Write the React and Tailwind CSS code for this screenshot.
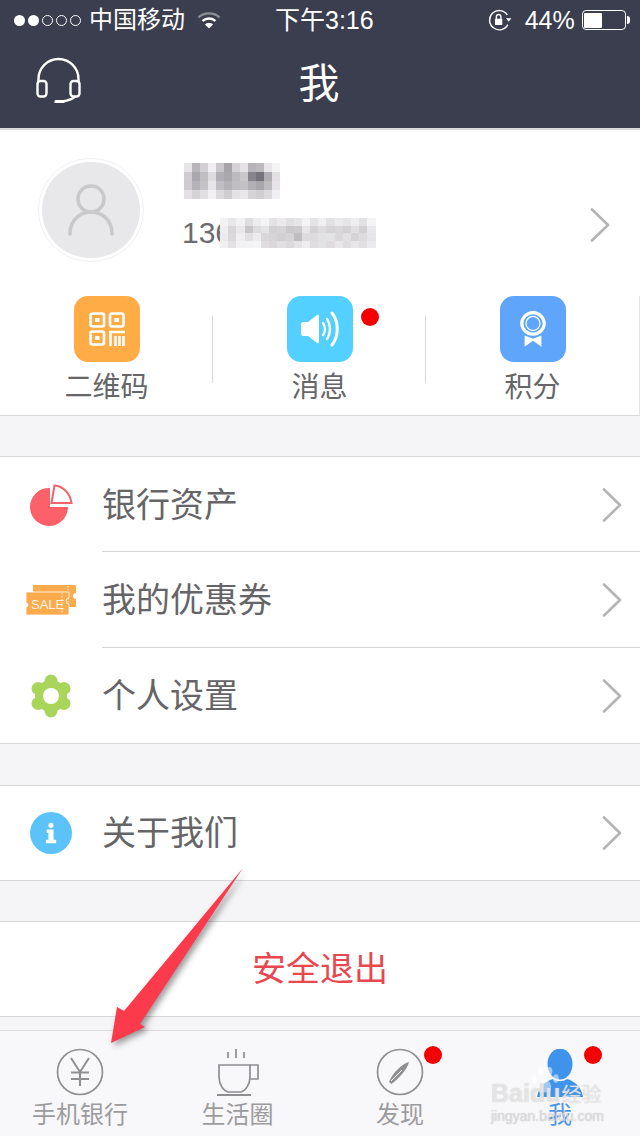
const FONT = '"Liberation Sans", "Noto Sans CJK SC", sans-serif';

const NAME_CELLS = [
  "e8e5e8","b9b6ba","d2d0d3","f0eef0","c9c7ca","a5a3a7","d4d2d5","e4e2e5","b6b4b8","bcbabd","e8e6e8","f5f4f5",
  "cfccd0","aaa8ac","c0bec1","dddbde","b2b0b4","a9a7ab","bcbabe","c9c7ca","87858a","76747a","b0aeb2","e2e0e3",
  "cdcbce","b5b3b7","c5c3c6","e6e4e7","c0bec2","b4b2b6","bfbdc0","c3c1c4","b1afb3","a8a6aa","bdbbbe","e6e4e7",
  "e3e1e4","d5d3d6","e1dfe2","f2f0f3","dcdadd","cfcdd0","e4e2e5","e9e7ea","d6d4d7","d0ced1","dcdadd","f0eff1",
];
const PHONE_CELLS = [
  "f3f2f3","e7e6e8","f1f0f2","dfdde0","ecebed","f3f2f4","e3e2e4","eceaed","e0dfe1","e6e5e7","f4f3f5","e4e3e5","f0eff1","e1e0e2","ebeaec","e6e5e7","eeedef","e2e1e3","f4f3f5",
  "eeeeef","d8d6d9","e8e7e9","c8c6c9","dddbde","e4e3e5","d2d0d3","d6d4d7","cac8cb","cdcbce","e6e5e7","d4d2d5","dedcdf","d6d4d7","d9d7da","d4d2d5","e0dfe1","d3d1d4","e8e7e9",
  "eceaed","dbd9dc","efeef0","e2e0e3","ecebed","d9d7da","d6d4d7","d2d0d3","d5d3d6","bfbdc0","dedcdf","dddbde","e2e1e3","e3e2e4","dad8db","e1e0e2","d5d3d6","dddbde","e5e4e6",
  "f0eff1","e3e1e4","f2f1f3","f3f2f4","f4f3f5","dfdde0","dad8db","e1dfe2","dcdadd","e5e3e6","eeedef","e0dee1","e3e2e4","dedcdf","e7e6e8","e0dee1","e6e5e7","e1dfe2","ebeaec",
];

function Mosaic({ cells, cols, cell, rowH, className }) {
  return (
    <div
      className={`grid ${className}`}
      style={{ gridTemplateColumns: `repeat(${cols}, ${cell}px)`, gridAutoRows: `${rowH}px` }}
    >
      {cells.map((c, i) => (
        <div key={i} style={{ backgroundColor: `#${c}` }} />
      ))}
    </div>
  );
}

function Chevron({ className }) {
  return (
    <svg viewBox="0 0 20 34" className={className} fill="none" stroke="#b4b4b6" strokeWidth="2.6">
      <path d="M2 1.5 L18 17 L2 32.5" strokeLinecap="round" strokeLinejoin="round" />
    </svg>
  );
}

function Dot({ className }) {
  return <span className={`absolute w-[18px] h-[18px] rounded-full bg-[#f50000] ${className}`} />;
}

function StatusBar() {
  return (
    <div className="relative h-10 flex items-center text-white text-[24px] pl-[14px]">
      <div className="flex gap-[3px] items-center">
        <span className="w-[11px] h-[11px] rounded-full bg-white" />
        <span className="w-[11px] h-[11px] rounded-full bg-white" />
        <span className="w-[11px] h-[11px] rounded-full border border-white" />
        <span className="w-[11px] h-[11px] rounded-full border border-white" />
        <span className="w-[11px] h-[11px] rounded-full border border-white" />
      </div>
      <span className="ml-[8px] leading-none">中国移动</span>
      <svg viewBox="0 0 24 18" className="ml-[12px] w-[24px] h-[18px]" fill="none">
        <path d="M1.5 6.5 C7 1 17 1 22.5 6.5" stroke="#8b8d97" strokeWidth="2.4" />
        <path d="M5.5 10 C9 6.6 15 6.6 18.5 10" stroke="#fff" strokeWidth="2.4" />
        <path d="M12 17.5 L8 13.5 C10 11.6 14 11.6 16 13.5 Z" fill="#fff" />
      </svg>
      <span className="ml-[54px] text-[25px] leading-none">下午3:16</span>
      <svg viewBox="0 0 26 24" className="ml-[114px] w-[24px] h-[22px]" fill="none" stroke="#fff" strokeWidth="1.5">
        <path d="M21 6.5 A10.5 10.5 0 1 0 21.5 17" />
        <path d="M19.5 10 L25.5 10 L22.5 14 Z" fill="#fff" stroke="none" />
        <rect x="7.5" y="10.5" width="8" height="7" rx="1" fill="#fff" stroke="none" />
        <path d="M9 11 V8.5 A2.5 2.5 0 0 1 14 8.5 V11" />
      </svg>
      <span className="ml-[13px] text-[25px] leading-none">44%</span>
      <div className="ml-[7px] w-[44px] h-[20px] rounded-[4px] border border-white p-[1.5px] flex">
        <div className="w-[18px] bg-white rounded-[1px]" />
      </div>
      <span className="w-[3px] h-[8px] bg-white rounded-r-sm ml-px" />
    </div>
  );
}

function ActionIcon({ bg, children }) {
  return (
    <div className={`w-[66px] h-[66px] rounded-[14px] flex items-center justify-center ${bg}`}>{children}</div>
  );
}

function Action({ label, divider, children, dot }) {
  return (
    <div className="relative flex-1 flex flex-col items-center">
      {children}
      <span className="mt-[7px] text-[28px] leading-[38px] text-[#666669]">{label}</span>
      {dot && <Dot className="left-[148px] top-[12px]" />}
      {divider && <span className="absolute right-0 top-[20px] h-[67px] w-px bg-[#d6d6d6]" />}
    </div>
  );
}

function Row({ icon, label, sep, h }) {
  return (
    <div className={`relative flex items-center pl-[26px] pr-[18px] ${h}`}>
      <div className="w-[50px] flex justify-center">{icon}</div>
      <span className="ml-[27px] -translate-x-px flex-1 text-[34px] leading-none text-[#656568]">{label}</span>
      <Chevron className="w-[20px] h-[34px]" />
      {sep && <span className="absolute left-[102px] right-0 bottom-0 h-px bg-[#d4d4d6]" />}
    </div>
  );
}

function Tab({ icon, label, color, dot }) {
  return (
    <div className="relative flex-1 flex flex-col items-center pt-[17px]">
      <div className="h-[48px] flex items-center justify-center">{icon}</div>
      <span className={`text-[24px] leading-[32px] mt-[3px] ${color}`}>{label}</span>
      {dot}
    </div>
  );
}

export default function App() {
  return (
    <div className="relative w-[640px] h-[1136px] overflow-hidden bg-[#f5f4f7]" style={{ fontFamily: FONT }}>
      <header className="h-[130px] bg-[#3b3e4e] border-b-2 border-[#d9d9da]">
        <StatusBar />
        <div className="relative h-[88px] flex items-center justify-center">
          <svg viewBox="0 0 46 46" className="absolute left-[36px] top-[17px] w-[46px] h-[46px]" fill="none" stroke="#fff" strokeWidth="2.4">
            <path d="M2.5 25 V22 A20 20 0 0 1 42.5 22 V25" />
            <rect x="1.5" y="24" width="9" height="15.5" rx="3" />
            <rect x="34.5" y="24" width="9" height="15.5" rx="3" />
            <path d="M39 39.5 C37 42 32 43.5 26 44.5" />
            <path d="M20 44.7 H27" strokeWidth="3.4" strokeLinecap="round" />
          </svg>
          <span className="text-[41px] leading-none text-white -translate-x-px">我</span>
        </div>
      </header>

      <section className="h-[286px] bg-white border-b border-[#d8d8da]">
        <div className="relative h-[166px]">
          <div className="absolute left-[38px] top-[28px] w-[106px] h-[104px] rounded-full border border-[#f1eff2] p-[3px]">
            <div className="w-full h-full rounded-full bg-[#e8e7ea] flex items-center justify-center">
              <svg viewBox="0 0 46 52" className="w-[46px] h-[52px]" fill="none" stroke="#c9c8cb" strokeWidth="3.6">
                <ellipse cx="23" cy="15" rx="13" ry="13" />
                <path d="M2 50 C2 36 12 28 23 28 C34 28 44 36 44 50" strokeLinecap="round" />
              </svg>
            </div>
          </div>
          <div className="absolute left-[182px] top-[86px] text-[30px] leading-[34px] text-[#6c6c70]">136</div>
          <Mosaic cells={NAME_CELLS} cols={12} cell={8} rowH={9} className="absolute left-[184px] top-[33px]" />
          <Mosaic cells={PHONE_CELLS} cols={19} cell={8.2} rowH={7.5} className="absolute left-[220px] top-[88px]" />
          <Chevron className="absolute left-[590px] top-[78px] w-[20px] h-[34px]" />
        </div>
        <div className="flex h-[119px] border-r border-[#e4e4e6]">
          <Action label="二维码" divider>
            <ActionIcon bg="bg-[#ffac47]">
              <svg viewBox="0 0 36 34" className="w-[36px] h-[34px]" fill="none" stroke="#fff" strokeWidth="2.6">
                <rect x="1.500" y="1.500" width="13.500" height="13" rx="2" />
                <rect x="21" y="1.500" width="13.500" height="13" rx="2" />
                <rect x="1.500" y="19.500" width="13.500" height="13" rx="2" />
                <rect x="6" y="6" width="4.500" height="4" fill="#fff" stroke="none" />
                <rect x="25.500" y="6" width="4.500" height="4" fill="#fff" stroke="none" />
                <rect x="6" y="24" width="4.500" height="4" fill="#fff" stroke="none" />
                <path d="M20 20 H36 M21.500 20 V34 M26.500 24 V34 M30.500 24 V34 M34.500 24 V34" />
              </svg>
            </ActionIcon>
          </Action>
          <Action label="消息" divider dot>
            <ActionIcon bg="bg-[#53d0ff]">
              <svg viewBox="0 0 40 36" className="w-[40px] h-[36px]" fill="none" stroke="#fff" strokeWidth="2.4" strokeLinecap="round">
                <path d="M1 13 C1 12 2 11 3 11 H8 L17 4 C18 3.500 19 4 19 5 V31 C19 32 18 32.500 17 32 L8 25 H3 C2 25 1 24 1 23 Z" fill="#fff" stroke="none" />
                <path d="M23 12 C25.500 15.500 25.500 20.500 23 24" />
                <path d="M27 8 C31 14 31 22 27 28" />
                <path d="M32 2 C39 11 39 25 32 34" strokeWidth="3" />
              </svg>
            </ActionIcon>
          </Action>
          <Action label="积分">
            <ActionIcon bg="bg-[#5fa5fb]">
              <svg viewBox="0 0 30 38" className="w-[28px] h-[36px]" fill="none" stroke="#fff">
                <ellipse cx="15" cy="13" rx="12" ry="11.500" strokeWidth="3.4" />
                <ellipse cx="15" cy="13" rx="7.500" ry="7.500" strokeWidth="1.400" />
                <path d="M6 26 L15 29.500 L24 26 L24 38 L18.500 34 L15 31.500 L11.500 34 L6 38 Z" fill="#fff" stroke="none" />
              </svg>
            </ActionIcon>
          </Action>
        </div>
      </section>

      <section className="mt-10 bg-white border-y border-[#d8d8da]">
        <Row
          label="银行资产"
          sep
          h="h-[95px]"
          icon={
            <svg viewBox="0 0 44 42" className="w-[44px] h-[42px] translate-x-[1px]">
              <path d="M20 5 V23 H38 A19 19 0 1 1 20 4 Z" fill="#fc6069" />
              <path d="M24.500 1.500 C33 2 40 9 41.500 19 H21.500 Z" fill="#fff" stroke="#f0656d" strokeWidth="2" />
            </svg>
          }
        />
        <Row
          label="我的优惠券"
          sep
          h="h-[96px]"
          icon={
            <svg viewBox="0 0 50 32" className="w-[50px] h-[32px] shrink-0">
              <path d="M7 1 H49 A1 1 0 0 1 50 2 V9 A3 3 0 0 0 50 15 V22 A1 1 0 0 1 49 23 H7 Z" fill="#fbaa4c" />
              <path d="M42 2 V22" stroke="#fff" strokeWidth="1" strokeDasharray="1.500 1.500" />
              <path d="M0 8 H43 V14 A3 3 0 0 0 43 20 V31 H0 V23 A2 2 0 0 0 0 19 Z" fill="#fbaa4c" stroke="#fff" strokeWidth="0.800" />
              <path d="M36 9 V30" stroke="#fff" strokeWidth="1" strokeDasharray="1.500 1.500" />
              <text x="5" y="24.500" fontSize="13" fill="#fff" fillOpacity="0.9" fontFamily="Liberation Sans, sans-serif">SALE</text>
            </svg>
          }
        />
        <Row
          label="个人设置"
          h="h-[95px]"
          icon={
            <svg viewBox="-22 -22 44 44" className="w-[44px] h-[44px]" fill="#a9d55a">
              <circle r="16" />
              <circle cx="0" cy="-15" r="6.500" />
              <circle cx="13" cy="-7.500" r="6.500" />
              <circle cx="13" cy="7.500" r="6.500" />
              <circle cx="0" cy="15" r="6.500" />
              <circle cx="-13" cy="7.500" r="6.500" />
              <circle cx="-13" cy="-7.500" r="6.500" />
              <circle r="8" fill="#fff" />
            </svg>
          }
        />
      </section>

      <section className="mt-[41px] bg-white border-y border-[#d8d8da]">
        <Row
          label="关于我们"
          h="h-[94px]"
          icon={
            <div className="w-[42px] h-[42px] rounded-full bg-[#5cc3f8] flex items-center justify-center">
              <svg viewBox="0 0 14 24" className="w-[12px] h-[22px]" fill="#fff">
                <circle cx="7" cy="3" r="3" />
                <path d="M2 8 H10 V20 H13 V24 H1 V20 H4 V12 H2 Z" />
              </svg>
            </div>
          }
        />
      </section>

      <section className="mt-10 h-[96px] bg-white border-y border-[#d8d8da] flex items-center justify-center text-[34px] text-[#e8474f]">
        安全退出
      </section>

      <nav className="absolute left-0 right-0 bottom-0 h-[106px] flex bg-[#f8f7fa] border-t border-[#dcdcde]">
        <div className="w-[160px] flex">
          <Tab
            label="手机银行"
            color="text-[#9c9c9f]"
            icon={
              <svg viewBox="0 0 48 48" className="w-[48px] h-[48px]" fill="none" stroke="#8f8f92" strokeWidth="1.700">
                <circle cx="24" cy="24" r="22.500" />
                <path d="M15 10 L24 24 L33 10 M15 24.500 H33 M15 31 H33 M24 24 V38" strokeWidth="2" />
              </svg>
            }
          />
        </div>
        <div className="w-[155px] flex">
          <Tab
            label="生活圈"
            color="text-[#9c9c9f]"
            icon={
              <svg viewBox="0 0 42 48" className="w-[42px] h-[48px]" fill="none" stroke="#8f8f92" strokeWidth="1.700">
                <path d="M11 4 V10 M19 1 V10 M27 4 V10" />
                <path d="M2 17 H33 V29 C33 37 28 43 24 44 H11 C7 43 2 37 2 29 Z" />
                <path d="M33 17 H41 V31 H32" />
                <path d="M0 47 H34" strokeWidth="2" />
              </svg>
            }
          />
        </div>
        <div className="w-[170px] flex">
          <Tab
            label="发现"
            color="text-[#9c9c9f]"
            dot={<Dot className="left-[109px] top-[15px]" />}
            icon={
              <svg viewBox="0 0 48 48" className="w-[48px] h-[48px]" fill="none" stroke="#8f8f92" strokeWidth="1.700">
                <circle cx="24" cy="24" r="22.500" />
                <path d="M33 14 C27 15 17 24 13 34 L15.500 36 C23 30 31 22 33 14 Z" fill="#8f8f92" stroke="none" />
                <path d="M15 33 L26 22" stroke="#f8f7fa" strokeWidth="1" />
              </svg>
            }
          />
        </div>
        <div className="flex-1 flex pr-[5px]">
          <Tab
            label="我"
            color="text-[#4c97e6]"
            dot={<Dot className="left-[99px] top-[15px]" />}
            icon={
              <svg viewBox="0 0 48 50" className="w-[48px] h-[50px] mt-[4px]" fill="#3f93ea">
                <ellipse cx="24" cy="15" rx="12.500" ry="15.500" />
                <path d="M1 48 C3 36 11 32 17 30 C21 33 27 33 31 30 C37 32 45 36 47 48 Z" />
              </svg>
            }
          />
        </div>
      </nav>

      {/* 经验 watermark lying over the tab bar */}
      <div className="absolute left-[490px] top-[1064px] w-[150px] h-[68px] pointer-events-none">
        <svg viewBox="0 0 50 40" className="absolute left-[40px] top-[1px] w-[36px] h-[30px]" fill="#ffffff" fillOpacity="0.5">
          <ellipse cx="6" cy="20" rx="4" ry="6" />
          <ellipse cx="15" cy="8" rx="4" ry="6" />
          <ellipse cx="27" cy="8" rx="4" ry="6" />
          <ellipse cx="36" cy="18" rx="4" ry="6" />
          <path d="M20 18 C27 18 32 30 28 35 C24 38 16 38 12 35 C8 30 14 18 20 18 Z" />
        </svg>
        <div className="absolute left-[1px] top-[14px] text-[25px] leading-[30px] font-bold whitespace-nowrap text-white/60 [text-shadow:0_0_1px_#bbb]">
          Baidu
          <span className="ml-[1px] text-[20px] font-normal">经验</span>
        </div>
        <div className="absolute left-[1px] top-[44px] text-[14px] leading-[16px] whitespace-nowrap text-white/50 [text-shadow:0_0_1px_#aaa]">
          jingyan.baidu.com
        </div>
      </div>

      {/* annotation arrow lying over the page */}
      <svg viewBox="0 0 640 1136" className="absolute inset-0 w-[640px] h-[1136px] pointer-events-none drop-shadow-[3px_3px_3px_rgba(0,0,0,0.4)]">
        <path d="M243 868 L124 1011 L117 1007 L111 1043 L145 1027 L140 1024 Z" fill="#fb3b4c" />
      </svg>
    </div>
  );
}
